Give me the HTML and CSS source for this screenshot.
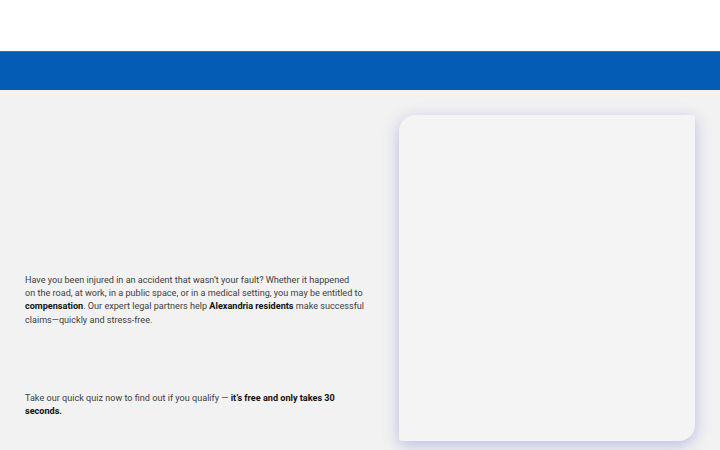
FILE: index.html
```html
<!DOCTYPE html>
<html>
<head>
<meta charset="utf-8">
<link rel="stylesheet" href="styles.css">
</head>
<body>
<header class="top"></header>
<div class="band"></div>
<main class="main">
  <section class="copy">
    <p class="lead">Have you been injured in an accident that wasn’t your fault? Whether it happened<br>on the road, at work, in a public space, or in a medical setting, you may be entitled to<br><b>compensation</b>. Our expert legal partners help <b>Alexandria residents</b> make successful<br>claims—quickly and stress-free.</p>
    <p class="cta">Take our quick quiz now to find out if you qualify — <b>it’s free and only takes 30<br>seconds.</b></p>
  </section>
  <aside class="card"></aside>
</main>
</body>
</html>
```
FILE: styles.css
```css
html, body { margin: 0; padding: 0; }
body {
  width: 720px;
  height: 450px;
  overflow: hidden;
  background: #f2f2f2;
  font-family: Roboto, "Open Sans", sans-serif;
  color: #404040;
}
.top { height: 51px; background: #ffffff; }
.band {
  height: 38px;
  background: #045cb4;
  border-top: 1px solid #3f6f9a;
}
.main {
  display: flex;
  justify-content: space-between;
  padding: 25px 25px 0 25px;
}
.copy {
  width: 355px;
  padding-top: 159px;
}
.copy p {
  margin: 0;
  font-size: 9.1px;
  line-height: 13.2px;
}
.copy b { color: #111; font-weight: 700; }
.lead { margin-bottom: 65px !important; }
.card {
  width: 296px;
  height: 326px;
  background: #f4f4f4;
  border-radius: 16px 3px 16px 3px;
  box-shadow: 0 4px 16px rgba(110, 110, 200, 0.42);
}
```
